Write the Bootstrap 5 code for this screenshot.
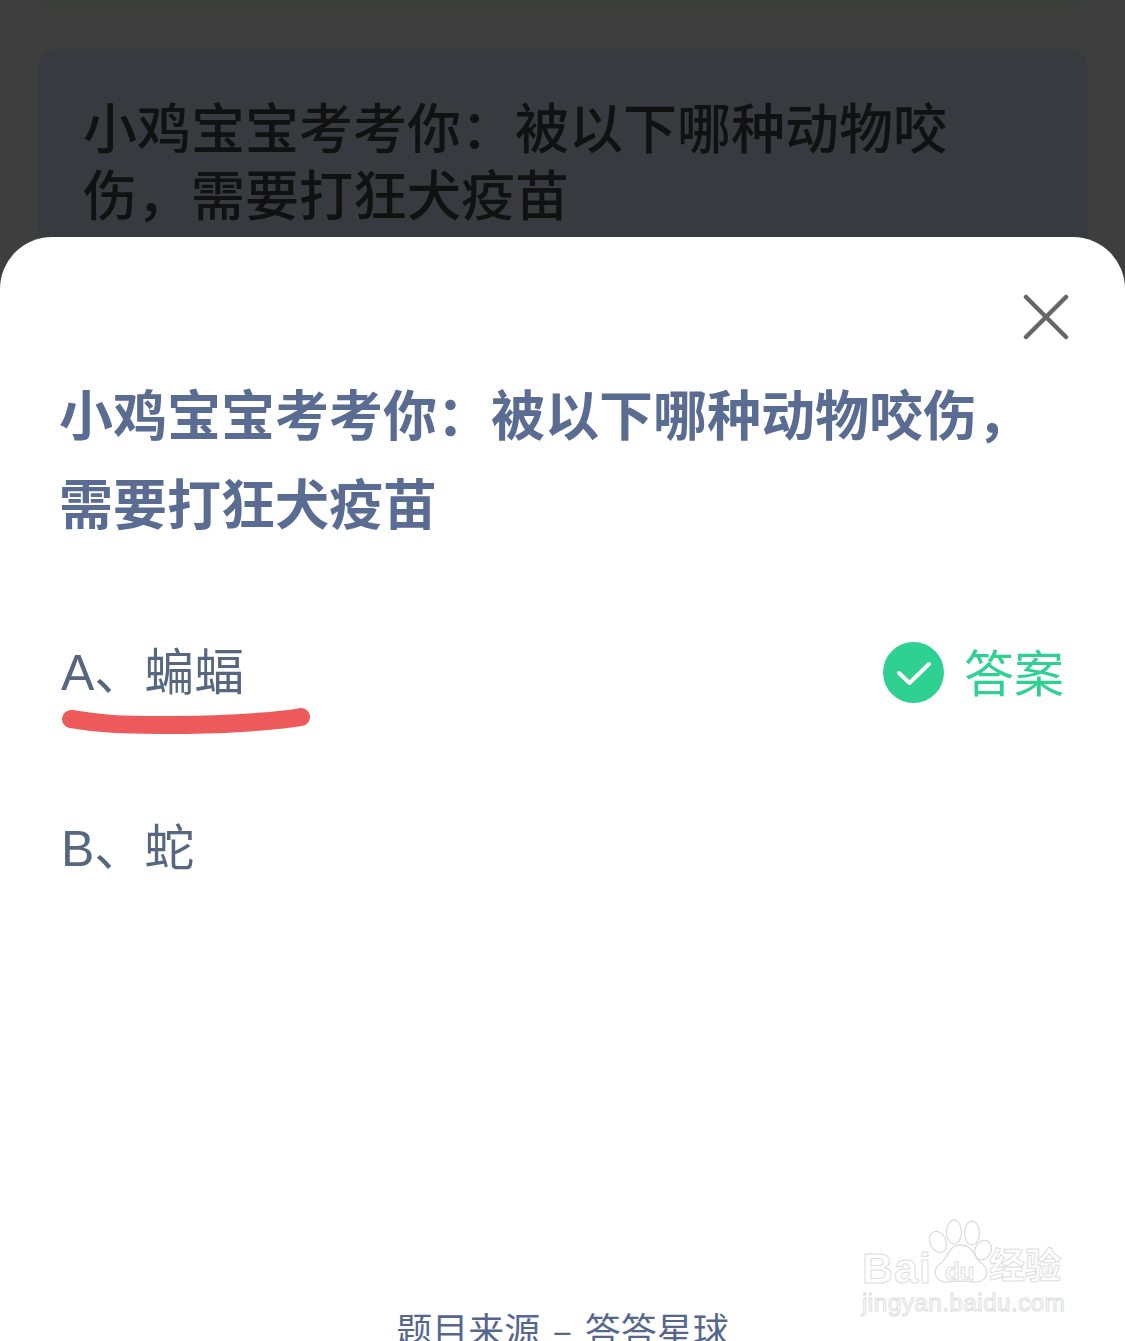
<!DOCTYPE html>
<html lang="zh">
<head>
<meta charset="utf-8">
<title>答题</title>
<link href="https://cdn.jsdelivr.net/npm/bootstrap@5.3.0/dist/css/bootstrap.min.css" rel="stylesheet">
<style>
html,body{height:1341px;overflow:hidden;background:#3e3e3e;font-family:"Noto Sans CJK SC","Liberation Sans",sans-serif}
.shade-zone{height:237px;overflow:hidden;background:#3e3e3e}
.strip-top{height:12px;margin:0 45px 36px 43px;background:#3a3f3c;border-radius:0 0 14px 14px}
.shade-card{margin:0 37px;height:260px;padding:44px 46px;background:#383a3f;border-radius:22px}
.shade-title{width:880px;font-size:54px;line-height:67px;font-weight:500;color:#111;margin:0}
.sheet{position:relative;height:1104px;background:#fff;border-radius:52px 52px 0 0;overflow:hidden;padding:0 61px}
.close-row{height:131px;padding-top:57px;margin-right:-5px}
.quest{font-size:54px;line-height:89px;font-weight:700;color:#5a6c92;margin:0 0 96px -2px;width:1004px}
.opt{font-family:"Liberation Sans","Noto Sans CJK SC",sans-serif;font-size:50px;line-height:60px;color:#56677f}
.opt-a{height:177px}
.opt-b{height:60px}
.answer{font-family:"Noto Sans CJK SC",sans-serif;color:#2fd193;font-size:50px;line-height:60px;gap:20px}
.answer-word{margin-top:-6px}
.stroke-mark{display:block;margin:3px 0 0 0}
.source{position:absolute;left:0;right:0;top:1066px;text-align:center;color:#56678f;font-size:36px;line-height:50px;white-space:nowrap;word-spacing:4.5px}
.wm{position:absolute;left:862px;top:981px;width:205px;height:100px}
.wm-bai,.wm-du,.wm-cn,.wm-url{position:absolute;white-space:nowrap;line-height:1;color:#fff;-webkit-text-stroke:1px #dedede}
.wm-bai{left:0;top:26px;font:700 43px "Liberation Sans",sans-serif;letter-spacing:1px}
.wm-du{left:83px;top:40px;font:700 24px "Liberation Sans",sans-serif}
.wm-cn{left:127px;top:27px;font-size:36px;font-weight:700}
.wm-url{left:0;top:71px;font:400 24.2px "Liberation Sans",sans-serif;letter-spacing:.5px}
</style>
</head>
<body>
<div class="shade-zone">
  <div class="strip-top"></div>
  <div class="shade-card">
    <h1 class="shade-title">小鸡宝宝考考你：被以下哪种动物咬伤，需要打狂犬疫苗</h1>
  </div>
</div>
<main class="sheet">
  <div class="close-row d-flex justify-content-end">
    <svg width="46" height="46" viewBox="0 0 46 46" aria-label="关闭"><path d="M3 3 43 43M43 3 3 43" stroke="#666" stroke-width="4.500" stroke-linecap="round" fill="none"/></svg>
  </div>
  <h2 class="quest">小鸡宝宝考考你：被以下哪种动物咬伤，需要打狂犬疫苗</h2>
  <div class="opt opt-a">
    <div class="d-flex justify-content-between align-items-center">
      <span>A、蝙蝠</span>
      <span class="answer d-flex align-items-center">
        <svg width="61" height="61" viewBox="0 0 61 61"><circle cx="30.5" cy="30.5" r="30.5" fill="#2fd193"/><path d="M16 31 26.500 41 46 22" stroke="#fff" stroke-width="4" stroke-linecap="round" stroke-linejoin="round" fill="none"/></svg>
        <span class="answer-word">答案</span>
      </span>
    </div>
    <svg class="stroke-mark" width="250" height="30" viewBox="0 0 250 30"><path d="M10 13C40 18 60 19 100 19S150 19 180 17 225 14 240 11" stroke="#ee5a5c" stroke-width="18" stroke-linecap="round" fill="none"/></svg>
  </div>
  <div class="opt opt-b">B、蛇</div>
  <div class="source">题目来源 – 答答星球</div>
  <div class="wm">
    <svg class="position-absolute top-0 start-0" width="205" height="70" viewBox="0 0 205 70" fill="#fff" stroke="#dedede" stroke-width="1.300">
      <ellipse cx="76" cy="24" rx="8" ry="11" transform="rotate(-25 76 24)"/>
      <ellipse cx="92" cy="14" rx="7.500" ry="12"/>
      <ellipse cx="110" cy="15" rx="7.500" ry="12"/>
      <ellipse cx="121" cy="32" rx="8" ry="10" transform="rotate(25 121 32)"/>
      <path d="M99 27C111 27 112 39 118 44 130 51 125 66 111 64 104 63 94 63 87 64 73 66 68 51 80 44 86 39 87 27 99 27Z"/>
    </svg>
    <span class="wm-bai">Bai</span>
    <span class="wm-du">du</span>
    <span class="wm-cn">经验</span>
    <span class="wm-url">jingyan.baidu.com</span>
  </div>
</main>
<script src="https://cdn.jsdelivr.net/npm/bootstrap@5.3.0/dist/js/bootstrap.bundle.min.js"></script>
</body>
</html>
